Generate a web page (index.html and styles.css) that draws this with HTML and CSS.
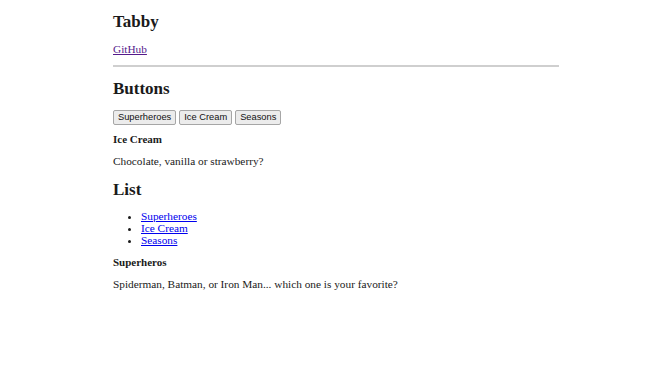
FILE: index.html
```html
<!DOCTYPE html>
<html lang="en">
<head>
  <meta charset="UTF-8">
  <title>Tabby</title>
  <link rel="stylesheet" href="styles.css">
</head>
<body>
<div class="page">
  <h1>Tabby</h1>
  <p><a class="visited" href="#">GitHub</a></p>
  <hr>

  <h2>Buttons</h2>
  <div class="tabs">
    <button>Superheroes</button>
    <button>Ice Cream</button>
    <button>Seasons</button>
  </div>
  <h4>Ice Cream</h4>
  <p>Chocolate, vanilla or strawberry?</p>

  <h2>List</h2>
  <ul>
    <li><a href="#">Superheroes</a></li>
    <li><a href="#">Ice Cream</a></li>
    <li><a href="#">Seasons</a></li>
  </ul>
  <h4>Superheros</h4>
  <p>Spiderman, Batman, or Iron Man... which one is your favorite?</p>
</div>
</body>
</html>
```

FILE: styles.css
```css
body {
  margin: 0;
  background: #fff;
  color: #1a1a1a;
  font-family: 'Liberation Serif', 'Times New Roman', serif;
  font-size: 11.3px;
}
.page {
  width: 446px;
  margin-left: 113px;
  padding-top: 12px;
}
h1, h2 {
  font-size: 17px;
  line-height: 20px;
  margin: 12px 0 10px;
}
h1 {
  margin-top: 0;
}
h4 {
  font-size: 11px;
  line-height: 13px;
  margin: 8px 0 7px;
}
p {
  line-height: 14px;
  margin: 8px 0;
}
a {
  color: #0000ee;
}
a.visited {
  color: #551a8b;
}
hr {
  border: none;
  border-top: 2px solid #cfcfcf;
  margin: 9px 0 12px;
}
.tabs {
  display: flex;
  gap: 3px;
  margin: 11px 0 8px;
}
.tabs button {
  font-family: 'Liberation Sans', Arial, sans-serif;
  font-size: 9.3px;
  line-height: 11px;
  padding: 1px 4px;
  color: #111;
  background: #ececec;
  border: 1px solid #a6a6a6;
  border-radius: 2px;
}
ul {
  margin: 10px 0;
  padding-left: 28px;
}
li {
  line-height: 12px;
}
```
